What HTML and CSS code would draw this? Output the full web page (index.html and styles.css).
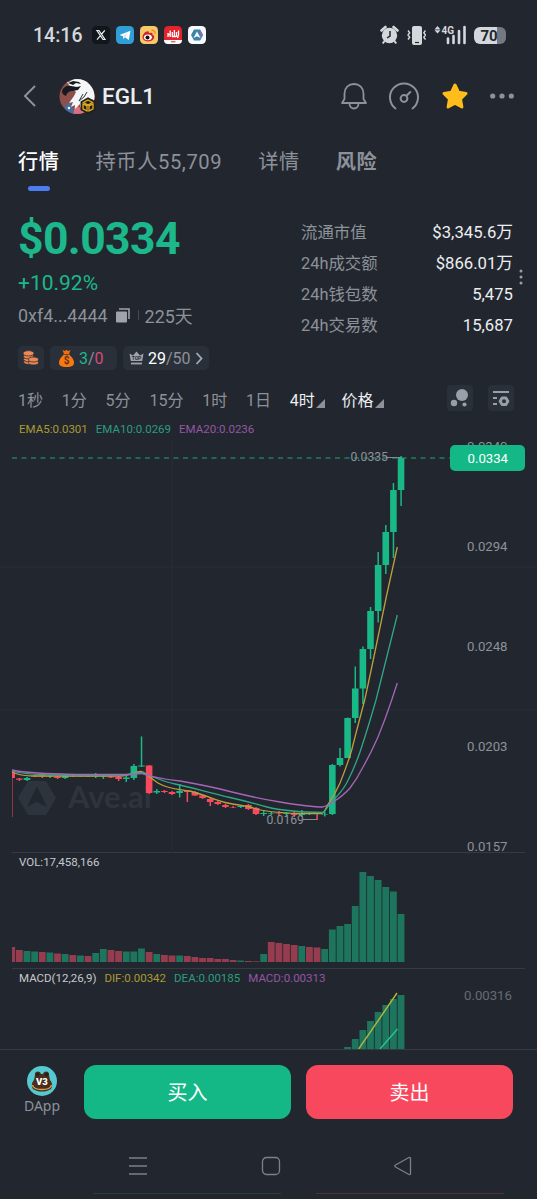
FILE: index.html
```
<!DOCTYPE html>
<html lang="zh-CN">
  <head>
    <meta charset="UTF-8" />
    <meta name="viewport" content="width=device-width, initial-scale=1.0" />
    <title>EGL1</title>
    <link rel="stylesheet" href="styles.css">
  </head>
  <body>
    <div class="status-bar">
      <span class="clock">14:16</span>
      <div class="app-icons">
        <svg width="18" height="18" viewBox="0 0 18 18"><rect width="18" height="18" rx="4.5" fill="#11161d"/><path d="M5 4.5h2l6 9h-2zM12.8 4.3 9.7 8M8.2 9.8l-3.2 3.8" fill="none" stroke="#eee" stroke-width="1.2"/></svg>
        <svg width="18" height="18" viewBox="0 0 18 18"><rect width="18" height="18" rx="4.5" fill="#309fd8"/><path d="M3.5 9 14.5 4.8 12.8 14 9 11.3 7.3 13 7 10.2z" fill="#fff"/><path d="m7 10.2 5-3.5-3.4 4" fill="#b5dcf0"/></svg>
        <svg width="18" height="18" viewBox="0 0 18 18"><rect width="18" height="18" rx="4.5" fill="#f7c969"/><path d="M2.5 11c0-3 4-6.500 6-5.500.6.400.4 1.500.4 1.500s3.500-1 3.600.6c0 .6-.3 1-.3 1s2 .5 2 2.400c0 2.500-3 4.400-6 4.400s-5.700-1.600-5.700-4.400z" fill="#d5242a"/><ellipse cx="7.900" cy="11.300" rx="4" ry="2.900" fill="#fff"/><circle cx="7.500" cy="11.500" r="2" fill="#111"/><path d="M11.500 4.300c2.500-.4 4 1.500 3.500 3.600" fill="none" stroke="#ee8a28" stroke-width="1.300"/></svg>
        <svg width="18" height="18" viewBox="0 0 18 18"><rect width="18" height="18" rx="4.500" fill="#e3242d"/><path d="M0 14h18a4 4 0 0 1-4 4H4a4 4 0 0 1-4-4z" fill="#fff"/><path d="M4 7v4M6.200 4.500v6.500M8.300 6v5M10.400 4v7M12.500 6v5M14.500 4.500V9l-1 3M3.500 8.500h3M8 10.500h4" fill="none" stroke="#fff" stroke-width="1.300"/><path d="M7 15.800h4.500" stroke="#e3242d"/></svg>
        <svg width="18" height="18" viewBox="0 0 18 18"><rect width="18" height="18" rx="4.500" fill="#f7fbfd"/><path d="M6 3.500h6L15 9l-3 5.500H6L3 9z" fill="#3c86a5"/><path d="M12 3.500 15 9l-3 5.500" fill="#7c72b8"/><path d="m9 5.500 3.500 6.500L9 10.300 5.500 12z" fill="#fff"/></svg>
      </div>
      <div class="system-icons">
        <svg width="19" height="20" viewBox="0 0 19 20"><circle cx="9.500" cy="10.500" r="7.700" fill="#d4d7dc"/><path d="M1.500 5.500 5.500 2M17.500 5.500l-4-3.500" stroke="#d4d7dc" stroke-width="2.600" stroke-linecap="round"/><path d="m4.500 16-1.700 2.500M14.500 16l1.700 2.500" stroke="#d4d7dc" stroke-width="2"/><path d="M10 6v5l-3 2" fill="none" stroke="#22272f" stroke-width="1.500"/></svg>
        <svg width="19" height="19" viewBox="0 0 19 19"><rect x="5" width="10" height="19" rx="2" fill="#d4d7dc"/><path d="M8 16.500h4" stroke="#22272f" stroke-width="1.200"/><path d="m1 4.500 1.700 2.200L1 9l1.700 2.200L1 13.500M18.500 4.500l-1.700 2.200 1.700 2.300-1.700 2.200 1.700 2.300" fill="none" stroke="#d4d7dc" stroke-width="1.400"/></svg>
        <svg width="32" height="20" viewBox="0 0 32 20"><path d="m3.500 1 3 3.400h-6zM3.500 8.500l3-3.200h-6z" fill="#d4d7dc"/><text x="7.500" y="8.500" class="net">4G</text><path d="M14 13.500v4.500M19.500 11v7M25 6v12M30.500 2v16" stroke="#d4d7dc" stroke-width="2.600" stroke-linecap="round"/></svg>
        <div class="battery">70</div>
      </div>
    </div>

    <div class="token-head">
      <svg class="back" width="14" height="24" viewBox="0 0 14 24"><path d="M12 2 2 12l10 10" fill="none" stroke="#8d9199" stroke-width="2"/></svg>
      <svg class="avatar" width="38" height="38" viewBox="0 0 38 38">
        <defs><clipPath id="face"><circle cx="18" cy="18.500" r="17.500"/></clipPath></defs>
        <g clip-path="url(#face)">
          <rect width="38" height="38" fill="#8c4f49"/>
          <path d="M6 28l5-4 6 14H6z" fill="#456e9f"/>
          <path d="m16 27 6 3 10-15 6 2v21H14z" fill="#d96f81"/>
          <path d="M10 4Q18-2 26 1q9 4 10 14v8l-3-2-1 5-3-3-3 5-1-4-4 6v-4l-5 5v-4l-4 2 2-5-4 1 5-7 2-4-5-4-4-6z" fill="#f4f6f8"/>
          <path d="M3 13c1-4 5-6 9-5l6 1 4-1-3 4-5 1c-3 0-6 1-7 5-3-1-4-3-4-5zM9 5l5-2 6 1 2 2-5-1-3 2z" fill="#16191f"/>
          <path d="m24 16-4 7 5-4 3-5" fill="none" stroke="#31363e" stroke-width="1"/>
          <circle cx="10" cy="30" r="1.200" fill="#fff"/>
        </g>
        <path d="M29 20.500 35.500 24v7.500L29 35l-6.500-3.500V24z" fill="#22211b" stroke="#22211b" stroke-width="2"/>
        <path d="m29 22 4.500 2.500L29 27l-4.500-2.500zM24 26l4 2v5l-4-2.200zM34 26l-4 2v5l4-2.200z" fill="none" stroke="#e5ae24" stroke-width="1.300"/>
      </svg>
      <h1 class="token-name">EGL1</h1>
      <div class="head-actions">
        <svg width="28" height="28" viewBox="0 0 28 28" fill="none" stroke="#8d9199" stroke-width="1.800" stroke-linejoin="round"><path d="M14 2C8.500 2 4.500 6 4.500 11.500V17L2 21h24l-2.500-4v-5.500C23.500 6 19.500 2 14 2z"/><path d="M9.500 21.500a4.500 5 0 0 0 9 0"/></svg>
        <svg width="32" height="28" viewBox="0 0 32 28" fill="none" stroke="#8d9199" stroke-width="2" stroke-linecap="round"><path d="M7.500 26.500A14 14 0 1 1 24.500 26.500"/><circle cx="16" cy="16.500" r="3.400"/><path d="m18.500 13.800 3.800-3.800"/></svg>
        <svg width="28" height="28" viewBox="0 0 28 28"><path d="m14 3 3.400 7.200 7.600 1.200-5.500 5.600 1.400 8L14 21.200 7.100 25l1.400-8L3 11.400l7.600-1.200z" fill="#ffbd1c" stroke="#ffbd1c" stroke-width="3" stroke-linejoin="round"/></svg>
        <svg width="26" height="6" viewBox="0 0 26 6" fill="#8d9199"><circle cx="3.700" cy="3" r="2.600"/><circle cx="13" cy="3" r="2.600"/><circle cx="22.300" cy="3" r="2.600"/></svg>
      </div>
    </div>

    <div class="tabs">
      <span class="tab active">行情</span>
      <span class="tab">持币人55,709</span>
      <span class="tab">详情</span>
      <span class="tab bold">风险</span>
    </div>

    <div class="summary">
      <div class="price-col">
        <div class="price">$0.0334</div>
        <div class="change">+10.92%</div>
        <div class="address">
          <span>0xf4...4444</span>
          <svg width="14" height="15" viewBox="0 0 14 15"><path d="M3 1h10v10" fill="none" stroke="#a0a3a9" stroke-width="1.600"/><rect y="3.500" width="11" height="11" rx="1" fill="#a0a3a9"/></svg>
          <i class="divider"></i>
          <span>225天</span>
        </div>
        <div class="badges">
          <div class="badge coins">
            <svg width="16" height="16" viewBox="0 0 16 16" fill="#ee8752" stroke="#2a3039" stroke-width=".8"><ellipse cx="6" cy="12" rx="5.500" ry="2.500"/><ellipse cx="6" cy="9.300" rx="5.500" ry="2.500"/><ellipse cx="5.500" cy="6.300" rx="5" ry="2.500"/><ellipse cx="5.500" cy="3.300" rx="5.500" ry="2.700"/><ellipse cx="10.500" cy="12.500" rx="5" ry="2.500"/><ellipse cx="10.500" cy="9.500" rx="5" ry="2.500"/></svg>
          </div>
          <div class="badge bag">
            <svg width="15" height="18" viewBox="0 0 15 18"><path d="m3.500 1 2 1 2-1 2 1 2-1-1.500 4h-5z" fill="#f36b12"/><path d="M4 5.500h7" stroke="#7c4423"/><path d="M4.500 6h6C13 8 15 11 15 13.500c0 3-2 4.500-7.500 4.500S0 16.500 0 13.500C0 11 2 8 4.500 6z" fill="#fb7810"/><text x="7.500" y="15" class="bag-sign">$</text></svg>
            <span><b class="up">3</b>/<b class="down">0</b></span>
          </div>
          <div class="badge top">
            <svg width="15" height="14" viewBox="0 0 15 14"><path d="m.5 2.500 3.500 2L7.500.5l3.500 4 3.500-2L13.200 10H1.800z" fill="#a0a3a9"/><path d="M2 12.500h11" stroke="#a0a3a9" stroke-width="1.800"/><text x="7.500" y="8.800" class="crown-text">TOP</text></svg>
            <span><b>29</b>/50</span>
            <svg width="8" height="13" viewBox="0 0 8 13"><path d="m1.500 1 5 5.500-5 5.500" fill="none" stroke="#a7abb1" stroke-width="1.800"/></svg>
          </div>
        </div>
      </div>
      <div class="stats">
        <span>流通市值</span><strong>$3,345.6万</strong>
        <span>24h成交额</span><strong>$866.01万</strong>
        <span>24h钱包数</span><strong>5,475</strong>
        <span>24h交易数</span><strong>15,687</strong>
      </div>
      <svg class="more" width="4" height="16" viewBox="0 0 4 16" fill="#9b9fa5"><circle cx="2" cy="2" r="1.500"/><circle cx="2" cy="8" r="1.500"/><circle cx="2" cy="14" r="1.500"/></svg>
    </div>

    <div class="intervals">
      <span>1秒</span>
      <span>1分</span>
      <span>5分</span>
      <span>15分</span>
      <span>1时</span>
      <span>1日</span>
      <span class="picked">4时</span>
      <span class="picked">价格</span>
      <div class="tools">
        <div class="tool"><svg width="20" height="20" viewBox="0 0 20 20" fill="#9a9ea6"><circle cx="12" cy="7" r="6"/><circle cx="4" cy="15" r="3.200"/><circle cx="14.500" cy="16.500" r="2.100"/></svg></div>
        <div class="tool"><svg width="20" height="20" viewBox="0 0 20 20" fill="none" stroke="#9a9ea6" stroke-width="2"><path d="M2 4h16M2 10h4M2 16h4"/><path d="m10.500 9 5 0 2.500 4.200-2.500 4.300h-5L8 13.200z" fill="#9a9ea6" stroke-linejoin="round" stroke-width="1"/><circle cx="13" cy="13.200" r="2" fill="#2a3039" stroke="none"/></svg></div>
      </div>
    </div>

    <div class="legend ema">
      <span class="yellow">EMA5:0.0301</span>
      <span class="green">EMA10:0.0269</span>
      <span class="purple">EMA20:0.0236</span>
    </div>
    <svg class="pane" width="537" height="413" viewBox="0 440 537 413">
      <path d="M0 567H537M0 710H537M172 440V853" stroke="#282d35" fill="none"/>
      <g class="watermark">
        <path d="M28 781h18l10 17-10 17H28l-10-17z"/>
        <path d="m37 786 10 21-10-5-10 5z" fill="#22272f"/>
        <text x="68" y="808">Ave.ai</text>
      </g>
      <g id="candles"></g>
      <path d="M12 458H451" stroke="#1ca579" stroke-width="1.200" stroke-dasharray="5 4.500"/>
      <g fill="none" stroke-width="1.300">
        <path stroke="#bda03a" d="M12 772Q20 776 34 776H120C130 776 136 771 141 771.500C147 773 151 779 158 783C170 790 180 789 190 791C205 795 215 800 225 802.500S245 805 255 808.500S285 813 300 813.500H322C325 812 326 807 329 803C333 797 337 790 340 783C344 773 348 763 351.700 750Q357 729 364.700 700C372 667 379 632 386.700 595L397.300 547"/>
        <path stroke="#2fa78a" d="M12 771C25 775 40 774.500 60 775H125Q137 773 141 772.500C150 775 160 781 175 784S210 793 230 797.500S255 804 267 807S295 812 323 812.500C326 811 328 805 333 800Q341 793 346.700 783Q354 769 360 752Q368 728 376 700L397.300 615"/>
        <path stroke="#a766b8" d="M12 770C30 774 50 773.500 80 774.500H130L141 773.500Q155 778 180 781Q203 785 220 789Q255 798 280 802Q310 807 323 807Q329 805 333 802Q343 796 350 788Q357 779 363 767Q371 753 378 737Q385 720 391.700 700L397.300 683"/>
      </g>
      <path d="M386 457.500H401M303 819.500H317" stroke="#858990"/>
      <g class="axis">
        <text x="350.500" y="461">0.0335</text>
        <text x="266.500" y="824">0.0169</text>
      </g>
      <g class="axis scale">
        <text x="467" y="450.500">0.0340</text>
        <text x="467" y="550.500">0.0294</text>
        <text x="467" y="650.500">0.0248</text>
        <text x="467" y="750.500">0.0203</text>
        <text x="467" y="850.500">0.0157</text>
      </g>
      <rect x="450" y="445" width="75" height="26" rx="5" fill="#14b886"/>
      <text x="467.500" y="463" class="price-tag">0.0334</text>
    </svg>

    <div class="legend vol"><span>VOL:17,458,166</span></div>
    <svg class="pane" width="537" height="100" viewBox="0 869 537 100"><g id="volume"></g></svg>

    <div class="legend macd">
      <span>MACD(12,26,9)</span>
      <span class="yellow">DIF:0.00342</span>
      <span class="green">DEA:0.00185</span>
      <span class="purple">MACD:0.00313</span>
    </div>
    <svg class="pane" width="537" height="63" viewBox="0 986 537 63">
      <g id="macd"></g>
      <path d="M358.700 1049 397 993" stroke="#b5b63d" stroke-width="1.400"/>
      <path d="m380 1049 17.500-20" stroke="#2cc297" stroke-width="1.400"/>
      <text x="464" y="999.500" class="macd-axis">0.00316</text>
    </svg>

    <div class="trade-bar">
      <div class="dapp">
        <svg width="30" height="30" viewBox="0 0 30 30"><circle cx="15" cy="15" r="15" fill="#56c8cf"/><path d="M8 9c-1-4 5-5 6-1h2c1-4 7-3 6 1l1 5c3 3 3 9-1 10-4 2-10 2-14 0-4-1-4-7-1-10z" fill="#4a2d1c"/><path d="M5.500 19c1 6 18 6 19 0" fill="none" stroke="#d9a650" stroke-width="1.500"/><circle cx="10.500" cy="8.500" r="1.800" fill="#1d2419"/><circle cx="19.500" cy="8.500" r="1.800" fill="#1d2419"/><text x="15" y="18.500" class="v3">V3</text></svg>
        <span>DApp</span>
      </div>
      <button class="buy">买入</button>
      <button class="sell">卖出</button>
    </div>

    <div class="system-nav">
      <svg width="20" height="20" viewBox="0 0 20 20"><path d="M1 2h18M1 10h18M1 18h18"/></svg>
      <svg width="20" height="20" viewBox="0 0 20 20"><rect x="1.500" y="1.500" width="17" height="17" rx="4"/></svg>
      <svg width="20" height="20" viewBox="0 0 20 20"><path d="M16 1.500 2.500 9q-1.500 1 0 2L16 18.500q1.500.5 1.500-1v-15q0-1.500-1.500-1z"/></svg>
    </div>
    <div class="edge"><i></i><i></i></div>

    <script>
      const UP = "#18b987";
      const DOWN = "#f8495e";
      const STEP = 7.634;

      // direction, wick top, wick bottom, body top, body bottom
      const candles = [
        ["d", 770, 817, 771, 778], ["d", 778, 781, 778.5, 779.7], ["u", 777, 781, 778, 780],
        ["d", 775, 777, 776, 776.5], ["d", 774, 778, 775.5, 776.5], ["u", 774.5, 778, 776, 776.6],
        ["d", 775, 779, 776.5, 778], ["u", 774, 779, 775, 778], ["u", 775, 777, 776, 776.5],
        ["u", 775, 777, 776, 776.5], ["u", 775, 777, 776, 776.5], ["u", 773, 778, 776, 776.5],
        ["u", 775, 779, 776, 776.5], ["d", 775, 778, 776.5, 777.5], ["d", 776, 781, 777, 779],
        ["u", 776, 782, 777.5, 779], ["u", 764, 780, 766, 778], ["u", 736.5, 767, 765.5, 766.5],
        ["d", 765, 794, 765.5, 793], ["u", 789, 794, 791, 792.5], ["d", 790, 793, 791, 792],
        ["d", 791, 795, 792, 794], ["u", 784, 797.5, 791, 793], ["d", 791, 802, 791, 792],
        ["d", 791, 796, 792, 795.5], ["d", 795, 799, 795.5, 798], ["d", 798, 806, 799, 802],
        ["d", 801, 805, 802, 804], ["d", 804, 808, 805, 807], ["d", 806, 808, 807, 807.5],
        ["u", 805, 808, 806, 807], ["d", 804, 810, 805, 809], ["d", 807, 815, 808, 814],
        ["u", 811, 816, 813, 814], ["u", 812, 815, 813, 813.5], ["d", 811, 816, 813, 813.5],
        ["u", 812, 816, 813, 814], ["d", 811, 817, 813, 815], ["u", 810, 817, 813, 815],
        ["u", 812, 815, 813, 813.5], ["d", 812, 820, 813, 813.5], ["u", 812, 816.5, 814, 814.5],
        ["u", 764, 815, 765, 814], ["u", 748, 766.5, 758, 765], ["u", 717.5, 758, 718, 758],
        ["u", 666.5, 723, 688.5, 718], ["u", 646.5, 704, 649, 688.5], ["u", 607, 659, 611, 649],
        ["u", 552, 622.5, 565, 611], ["u", 525, 574, 532, 565], ["u", 483, 558, 490, 532],
        ["u", 456, 506, 458, 490],
      ];
      const volume = [
        -15, -12, 11, 10.5, -10, 9.5, -8.5, 8, -7, 6.5, -6, 9, 13, -12, -11, 10.5, 10.5, 13.5,
        -10, 8, -7, -6.5, 6.5, -6, -5, -4, -4, -3, -3, -2, 1.5, -1, -0.7, 8, -20, -19, -18, -17,
        16, -15, -14.5, 13, 32.5, 36, 38, 56, 90, 86, 82, 75, 70.5, 48,
      ];
      const macd = [2, 10, 19, 28, 37, 44, 50, 54];

      const centre = (i) => 11.7 + STEP * i;

      // bars are cut at the left border of the chart
      const rect = (x, y, w, h, fill) => {
        const left = Math.max(x, 12);
        return `<rect x="${left}" y="${y}" width="${x + w - left}" height="${h}" fill="${fill}"/>`;
      };

      document.getElementById("candles").innerHTML = candles
        .map(([dir, high, low, top, bottom], i) => {
          const fill = dir === "u" ? UP : DOWN;
          return (
            rect(centre(i) - 0.7, high, 1.5, low - high, fill) +
            rect(centre(i) - 3.3, top, 6.6, bottom - top, fill)
          );
        })
        .join("");

      document.getElementById("volume").innerHTML = volume
        .map((v, i) => rect(centre(i) - 3.4, 962 - Math.abs(v), 6.8, Math.abs(v), v > 0 ? "#1d755e" : "#953c4e"))
        .join("");

      document.getElementById("macd").innerHTML = macd
        .map((v, i) => rect(centre(i + 44) - 3.4, 1049 - v, 6.8, v, "#1d755e"))
        .join("");
    </script>
  </body>
</html>
```
FILE: styles.css
```
* {
  box-sizing: border-box;
}
body {
  margin: 0;
  width: 537px;
  height: 1199px;
  overflow: hidden;
  background-color: #22272f;
  color: #8d9199;
  font-family: Roboto, "Noto Sans CJK SC", sans-serif;
  font-size: 16px;
  white-space: nowrap;
}
svg {
  display: block;
  flex: none;
}
b,
strong {
  font-weight: 400;
}

/* status bar */
.status-bar {
  display: flex;
  align-items: center;
  height: 70px;
  padding: 0 31px 0 33px;
}
.clock {
  width: 59px;
  font-size: 19.5px;
  font-weight: 500;
  color: #d4d7dc;
}
.app-icons {
  display: flex;
  gap: 6px;
}
.system-icons {
  display: flex;
  align-items: center;
  gap: 8px;
  margin-left: auto;
}
.net {
  font-size: 10px;
  font-weight: 700;
  fill: #d4d7dc;
}
.battery {
  width: 32px;
  height: 17px;
  padding-right: 2px;
  border-radius: 6px;
  background: linear-gradient(90deg, #d4d7dc 72%, #747981 72%);
  color: #22272f;
  font-size: 15px;
  font-weight: 700;
  line-height: 18px;
  text-align: center;
}

/* token header */
.token-head {
  display: flex;
  align-items: center;
  height: 51px;
  padding: 0 22px 0 23px;
}
.avatar {
  margin: 3px 0 0 22px;
}
.token-name {
  margin: 0 0 0 5px;
  font-size: 22.5px;
  font-weight: 500;
  color: #eceef1;
}
.head-actions {
  display: flex;
  align-items: center;
  gap: 20.5px;
  margin-left: auto;
}

/* tabs */
.tabs {
  display: flex;
  align-items: center;
  gap: 36px;
  height: 76px;
  padding: 17px 18px 0;
  font-size: 20.2px;
  letter-spacing: 0.6px;
}
.tab {
  display: flex;
  flex-direction: column;
  height: 46px;
  line-height: 34px;
}
.active {
  color: #fff;
  font-weight: 500;
}
.active::after {
  content: "";
  align-self: center;
  width: 22px;
  height: 5px;
  margin-top: 7px;
  border-radius: 3px;
  background-color: #4b7cf0;
}
.bold {
  font-weight: 700;
}

/* price and statistics */
.summary {
  display: flex;
  height: 181px;
  padding: 17px 14px 0 18px;
}
.price-col {
  width: 283px;
}
.price {
  height: 52px;
  color: #1cb88b;
  font-size: 44.5px;
  font-weight: 700;
  line-height: 50px;
  letter-spacing: -0.6px;
}
.change {
  height: 34px;
  color: #1cb88b;
  font-size: 21px;
  line-height: 34px;
}
.address {
  display: flex;
  align-items: center;
  height: 30px;
  font-size: 17.9px;
}
.address svg {
  margin-left: 8px;
}
.divider {
  width: 1px;
  height: 10px;
  margin: 0 6px 0 8px;
  background-color: #444951;
}
.badges {
  display: flex;
  gap: 6px;
  margin-top: 16px;
}
.badge {
  display: flex;
  align-items: center;
  gap: 4px;
  height: 24px;
  padding: 0 6px;
  border-radius: 5px;
  background-color: #2a3039;
}
.coins {
  width: 26px;
}
.coins svg {
  margin-left: -1px;
}
.bag {
  width: 67px;
  padding-left: 9px;
  gap: 5px;
}
.top {
  width: 86px;
}
.badge b {
  color: #fff;
}
.badge .up {
  color: #1cb88b;
}
.badge .down {
  color: #d84b79;
}
.bag-sign {
  fill: #593016;
  font-size: 10px;
  font-weight: 700;
  text-anchor: middle;
}
.crown-text {
  fill: #2a3039;
  font-size: 5px;
  font-weight: 700;
  text-anchor: middle;
}
.stats {
  display: grid;
  grid-template-columns: auto auto;
  grid-auto-rows: 31px;
  justify-content: space-between;
  align-content: start;
  width: 212px;
  margin-top: 3px;
  font-size: 16.4px;
  line-height: 31px;
}
.stats strong {
  color: #eceef1;
  font-size: 16.7px;
  text-align: right;
}
.more {
  margin: 55px 0 0 6px;
}

/* intervals */
.intervals {
  display: flex;
  align-items: center;
  gap: 18.8px;
  height: 41px;
  padding: 0 23px 0 18px;
}
.picked {
  display: flex;
  align-items: center;
  color: #eceef1;
}
.picked::after {
  content: "";
  margin: 10px -2px 0 1px;
  border-left: 9px solid transparent;
  border-bottom: 9px solid #8d9199;
}
.tools {
  display: flex;
  gap: 15px;
  margin: 0 0 2px auto;
}
.tool {
  padding: 3px;
  border-radius: 4px;
  background-color: #2a3039;
}

/* chart */
.legend {
  display: flex;
  gap: 8px;
  padding-left: 19px;
  font-size: 11.5px;
}
.ema {
  height: 21px;
  line-height: 21px;
}
.vol,
.macd {
  height: 17px;
  margin: 0 12px;
  padding-left: 7px;
  line-height: 19px;
  color: #c5c9ce;
  box-shadow: 0 -1px #353b43;
}
.vol {
  height: 16px;
}
.yellow {
  color: #a99a32;
}
.green {
  color: #2c9c7f;
}
.purple {
  color: #9655a5;
}
.watermark {
  fill: #2e343d;
}
.watermark text {
  font-family: Lato, sans-serif;
  font-size: 31px;
  font-weight: 700;
}
.axis {
  fill: #8d9199;
  font-size: 12.2px;
}
.scale {
  font-size: 13.2px;
}
.price-tag {
  fill: #fff;
  font-size: 13.2px;
}
.macd-axis {
  fill: #666b73;
  font-size: 13.2px;
}

/* bottom */
.trade-bar {
  display: flex;
  gap: 15px;
  height: 85px;
  padding: 15px 24px 0 18px;
  border-top: 1px solid #353b43;
}
.dapp {
  display: flex;
  flex-direction: column;
  align-items: center;
  width: 48px;
  margin-right: 3px;
  padding-top: 1px;
  font-family: "Noto Sans", sans-serif;
  font-size: 14px;
}
.v3 {
  fill: #fff;
  font-family: Roboto, sans-serif;
  font-size: 9.5px;
  font-weight: 900;
  text-anchor: middle;
}
.buy,
.sell {
  width: 207px;
  height: 54px;
  padding-bottom: 3px;
  border: none;
  border-radius: 12px;
  color: #fff;
  font-family: "Noto Sans CJK SC", sans-serif;
  font-size: 20px;
}
.buy {
  background-color: #14b886;
}
.sell {
  background-color: #f8485d;
}
.system-nav {
  display: flex;
  justify-content: space-between;
  height: 59px;
  padding: 22px 124px 0 128px;
}
.system-nav svg {
  fill: none;
  stroke: #7c8188;
  stroke-width: 1.3;
}
.edge {
  display: flex;
  gap: 35px;
  padding-left: 93px;
}
.edge i {
  width: 188px;
  height: 1px;
  background-color: #2c3d3f;
}
.edge i:last-child {
  background-color: #513039;
}
```
